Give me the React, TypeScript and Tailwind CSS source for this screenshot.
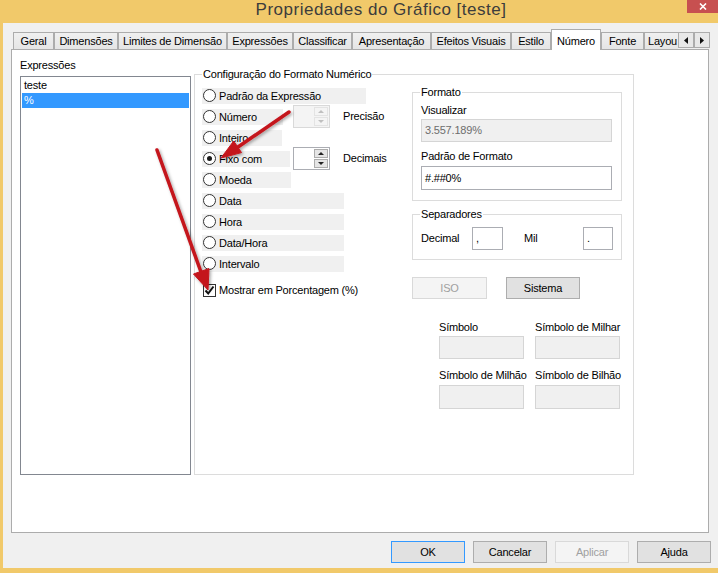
import React from 'react';

const tabs = [
  { label: 'Geral', w: 'w-[41px]' },
  { label: 'Dimensões', w: 'w-[64px]' },
  { label: 'Limites de Dimensão', w: 'w-[109px]' },
  { label: 'Expressões', w: 'w-[66px]' },
  { label: 'Classificar', w: 'w-[59px]' },
  { label: 'Apresentação', w: 'w-[79px]' },
  { label: 'Efeitos Visuais', w: 'w-[80px]' },
  { label: 'Estilo', w: 'w-[40px]' },
  { label: 'Número', w: 'w-[50px]', active: true },
  { label: 'Fonte', w: 'w-[43px]' },
];

const Radio = ({ checked = false }: { checked?: boolean }) => (
  <span className="ml-[1px] w-[13px] h-[13px] rounded-full border border-[#333] bg-white flex items-center justify-center shrink-0">
    {checked && <span className="w-[5px] h-[5px] rounded-full bg-[#1a1a1a]" />}
  </span>
);

const Spinner = ({ disabled = false }: { disabled?: boolean }) => (
  <div className={`w-[37px] h-[23px] flex border ${disabled ? 'border-[#d9d9d9] bg-[#f4f4f4]' : 'border-[#abadb3] bg-white'}`}>
    <div className="flex-1" />
    <div className="w-[16px] flex flex-col p-[1px] gap-[1px]">
      {['M1 4 L4 1 L7 4 Z', 'M1 1 L4 4 L7 1 Z'].map((d) => (
        <div key={d} className={`flex-1 flex items-center justify-center border ${disabled ? 'border-[#e3e3e3] bg-[#f4f4f4]' : 'border-[#acacac] bg-[#e5e5e5]'}`}>
          <svg width="8" height="5" viewBox="0 0 8 5">
            <path d={d} fill={disabled ? '#bfbfbf' : '#222'} />
          </svg>
        </div>
      ))}
    </div>
  </div>
);

const RadioRow = ({ label, bg, checked, extra }: { label: string; bg: string; checked?: boolean; extra?: React.ReactNode }) => (
  <div className="h-[21px] flex items-center">
    <div className={extra ? 'w-[91px] shrink-0' : ''}>
      <div className={`${bg} h-[16px] bg-[#f0f0f0] flex items-center`}>
        <Radio checked={checked} />
        <span className="ml-[3px] leading-[14px]">{label}</span>
      </div>
    </div>
    {extra}
  </div>
);

const Button = ({ label, disabled, primary, w = 'w-[74px]' }: { label: string; disabled?: boolean; primary?: boolean; w?: string }) => (
  <div
    className={`${w} h-[22px] flex items-center justify-center border ${
      disabled
        ? 'border-[#d9d9d9] bg-[#f4f4f4] text-[#a0a0a0]'
        : primary
          ? 'border-[#3399ff] bg-[#e1e1e1]'
          : 'border-[#adadad] bg-[#e1e1e1]'
    }`}
  >
    {label}
  </div>
);

const App: React.FC = () => {
  return (
    <div className="relative w-[718px] h-[573px] bg-[#f1c96a] flex flex-col overflow-hidden whitespace-nowrap font-['Liberation_Sans',Arial,sans-serif] text-[11px] tracking-[-0.2px] text-black">
      {/* Title bar */}
      <div className="h-[23px] flex items-start shrink-0">
        <div className="flex-1 pl-[75px] text-center text-[17px] tracking-[0.5px] leading-[19px] text-[#3c3c3c]">
          Propriedades do Gráfico [teste]
        </div>
        <div className="w-[31px] h-[13px] bg-[#c75050] flex items-center justify-center">
          <svg width="8" height="7" viewBox="0 0 8 7">
            <path d="M1 0.5 L7 6.5 M7 0.5 L1 6.5" stroke="#fff" strokeWidth="1.6" />
          </svg>
        </div>
      </div>

      {/* Dialog body */}
      <div className="flex-1 ml-[3px] mb-[5px] bg-[#f0f0f0] flex flex-col">
        {/* Tab strip */}
        <div className="mt-[6px] ml-[10px] h-[20px] flex items-end">
          {tabs.map((t) =>
            t.active ? (
              <div
                key={t.label}
                className={`${t.w} h-[21px] -mb-[1px] relative z-10 bg-white border border-b-0 border-[#acacac] flex items-start justify-center pt-[3px]`}
              >
                {t.label}
              </div>
            ) : (
              <div
                key={t.label}
                className={`${t.w} h-[17px] border border-b-0 border-[#acacac] bg-[linear-gradient(#f0f0f0,#e5e5e5)] flex items-center justify-center`}
              >
                {t.label}
              </div>
            ),
          )}
          <div className="w-[34px] h-[17px] border-l border-t border-[#acacac] bg-[linear-gradient(#f0f0f0,#e5e5e5)] flex items-center pl-[3px]">
            Layou
          </div>
          <div className="self-start mt-[3px] flex">
            {['M4 0 L0 3.5 L4 7 Z', 'M0 0 L4 3.5 L0 7 Z'].map((d) => (
              <div key={d} className="w-[16px] h-[16px] border border-[#acacac] bg-[#e8e8e8] flex items-center justify-center">
                <svg width="4" height="7" viewBox="0 0 4 7">
                  <path d={d} fill="#111" />
                </svg>
              </div>
            ))}
          </div>
        </div>

        {/* Tab page */}
        <div className="ml-[8px] w-[698px] h-[484px] bg-white border border-[#acacac] flex items-start">
          {/* Expressions list */}
          <div className="ml-[8px] pt-[8px] flex flex-col">
            <div className="leading-[14px]">Expressões</div>
            <div className="mt-[4px] w-[171px] h-[399px] border border-[#828790] p-[1px] flex flex-col">
              <div className="h-[15px] leading-[15px] pl-[2px]">teste</div>
              <div className="h-[15px] leading-[15px] pl-[2px] bg-[#3399ff] text-white">%</div>
            </div>
          </div>

          {/* Number format group */}
          <fieldset className="ml-[3px] mt-[17px] w-[440px] h-[408px] border border-[#dcdcdc]">
            <legend className="ml-[7px] px-[1px] leading-[14px]">Configuração do Formato Numérico</legend>
            <div className="flex items-start">
              {/* Radios */}
              <div className="pl-[7px] pt-[4px] w-[217px] flex flex-col">
                <RadioRow label="Padrão da Expressão" bg="w-[164px]" />
                <RadioRow
                  label="Número"
                  bg="w-[81px]"
                  extra={
                    <>
                      <Spinner disabled />
                      <span className="ml-[13px]">Precisão</span>
                    </>
                  }
                />
                <RadioRow label="Inteiro" bg="w-[80px]" />
                <RadioRow
                  label="Fixo com"
                  bg="w-[88px]"
                  checked
                  extra={
                    <>
                      <Spinner />
                      <span className="ml-[13px]">Decimais</span>
                    </>
                  }
                />
                <RadioRow label="Moeda" bg="w-[89px]" />
                <RadioRow label="Data" bg="w-[142px]" />
                <RadioRow label="Hora" bg="w-[142px]" />
                <RadioRow label="Data/Hora" bg="w-[142px]" />
                <RadioRow label="Intervalo" bg="w-[142px]" />
                <div className="mt-[10px] h-[13px] flex items-center">
                  <span className="ml-[1px] w-[13px] h-[13px] border border-[#333] bg-white flex items-center justify-center">
                    <svg width="11" height="11" viewBox="0 0 11 11">
                      <path d="M1.5 5.5 L4.2 8.5 L9.5 1.5" stroke="#111" strokeWidth="2" fill="none" />
                    </svg>
                  </span>
                  <span className="ml-[3px]">Mostrar em Porcentagem (%)</span>
                </div>
              </div>

              {/* Right column */}
              <div className="w-[210px] mt-[4px] flex flex-col">
                <fieldset className="h-[116px] border border-[#dcdcdc]">
                  <legend className="ml-[7px] px-[1px] leading-[14px]">Formato</legend>
                  <div className="pl-[8px] flex flex-col">
                    <div className="mt-[4px] leading-[14px]">Visualizar</div>
                    <div className="mt-[2px] w-[191px] h-[23px] border border-[#d5d5d5] bg-[#f0f0f0] text-[#6d6d6d] flex items-center pl-[3px]">
                      3.557.189%
                    </div>
                    <div className="mt-[7px] leading-[14px]">Padrão de Formato</div>
                    <div className="mt-[3px] w-[191px] h-[24px] border border-[#abadb3] bg-white flex items-center pl-[3px]">
                      #.##0%
                    </div>
                  </div>
                </fieldset>

                <fieldset className="mt-[6px] h-[53px] border border-[#dcdcdc]">
                  <legend className="ml-[7px] px-[1px] leading-[14px]">Separadores</legend>
                  <div className="mt-[6px] h-[23px] pl-[8px] flex items-center">
                    <span className="w-[51px]">Decimal</span>
                    <div className="w-[31px] h-[23px] border border-[#abadb3] bg-white flex items-center pl-[3px]">,</div>
                    <span className="ml-[21px] w-[59px]">Mil</span>
                    <div className="w-[30px] h-[23px] border border-[#abadb3] bg-white flex items-center pl-[3px]">.</div>
                  </div>
                </fieldset>

                <div className="mt-[17px] flex">
                  <Button label="ISO" disabled w="w-[75px]" />
                  <div className="ml-[19px]">
                    <Button label="Sistema" />
                  </div>
                </div>

                <div className="pl-[27px] grid grid-cols-[85px_85px] gap-x-[11px]">
                  <div className="mt-[21px] leading-[14px]">Símbolo</div>
                  <div className="mt-[21px] leading-[14px]">Símbolo de Milhar</div>
                  <div className="mt-[2px] h-[23px] border border-[#d5d5d5] bg-[#f0f0f0]" />
                  <div className="mt-[2px] h-[23px] border border-[#d5d5d5] bg-[#f0f0f0]" />
                  <div className="mt-[9px] leading-[14px]">Símbolo de Milhão</div>
                  <div className="mt-[9px] leading-[14px]">Símbolo de Bilhão</div>
                  <div className="mt-[3px] h-[24px] border border-[#d5d5d5] bg-[#f0f0f0]" />
                  <div className="mt-[3px] h-[24px] border border-[#d5d5d5] bg-[#f0f0f0]" />
                </div>
              </div>
            </div>
          </fieldset>
        </div>

        {/* Dialog buttons */}
        <div className="mt-[8px] pr-[7px] flex justify-end gap-[8px]">
          <Button label="OK" primary />
          <Button label="Cancelar" />
          <Button label="Aplicar" disabled />
          <Button label="Ajuda" />
        </div>
      </div>

      {/* Red annotation arrows */}
      <svg className="absolute inset-0 pointer-events-none" width="718" height="573" viewBox="0 0 718 573">
        <defs>
          <filter id="sh" x="-20%" y="-20%" width="140%" height="140%">
            <feDropShadow dx="1.5" dy="1.5" stdDeviation="1.5" floodColor="#000" floodOpacity="0.35" />
          </filter>
        </defs>
        <g filter="url(#sh)" fill="#c4141c" stroke="#c4141c">
          <line x1="289" y1="112" x2="238" y2="147" strokeWidth="3.5" strokeLinecap="round" />
          <polygon points="221,158 241.5,152.6 233.7,141" strokeWidth="1" strokeLinejoin="round" />
          <line x1="157" y1="150" x2="201" y2="272" strokeWidth="3.5" strokeLinecap="round" />
          <polygon points="208,290 209,268.5 193.5,274" strokeWidth="1" strokeLinejoin="round" />
        </g>
      </svg>
    </div>
  );
};

export default App;
